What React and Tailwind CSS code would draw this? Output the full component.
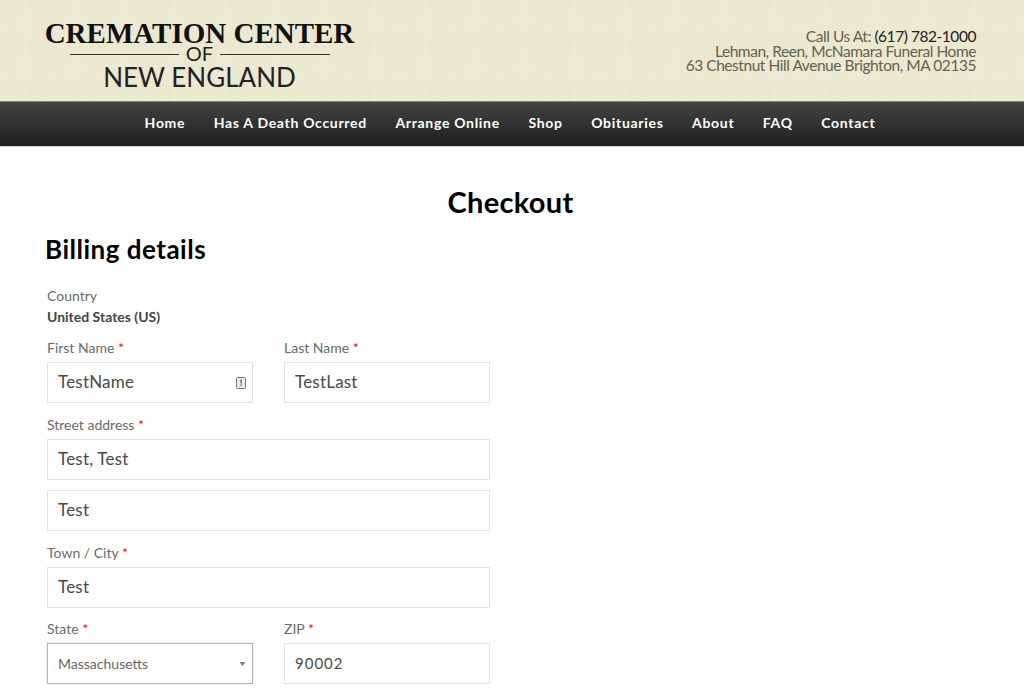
const Lbl = ({ children, req = true }) => (
  <div className="text-[14px] leading-[18px] text-[#6b6b6b] mb-[5px]">
    {children}
    {req && <span className="text-[#e01020]"> *</span>}
  </div>
);

const Inp = ({ value, children }) => (
  <div className="h-[41px] border border-[#e2e2e2] bg-white flex items-center justify-between px-[10px] pb-[2px] text-[17px] tracking-[0.2px] text-[#4a4a4a]">
    <span>{value}</span>
    {children}
  </div>
);

const nav = ["Home", "Has A Death Occurred", "Arrange Online", "Shop", "Obituaries", "About", "FAQ", "Contact"];

export default function App() {
  return (
    <div className="w-[1024px] h-[690px] overflow-hidden bg-white font-['Lato',sans-serif]">
      <header className="relative h-[102px] bg-[#eae8ce] border-b border-[#85836f] flex justify-between overflow-hidden">
        <svg className="absolute inset-0 w-full h-full" aria-hidden="true">
          <defs>
            <pattern id="p" width="50" height="46" patternUnits="userSpaceOnUse">
              <g stroke="#edebd6" strokeWidth="1.5" fill="none">
                <path d="M25 0C22 14 14 24 0 32M25 0C28 14 36 24 50 32" />
                <path d="M25 8C22 20 14 30 0 40M25 8C28 20 36 30 50 40" />
                <path d="M25 16C22 28 14 36 2 46M25 16C28 28 36 36 48 46" />
                <path d="M25 24C23 32 18 40 12 46M25 24C27 32 32 40 38 46" />
                <path d="M25 0V46" />
                <path d="M0 32C-3 38 -6 42 -8 46M50 32C47 24 42 14 38 0M0 32C3 24 8 14 12 0" />
              </g>
            </pattern>
          </defs>
          <rect width="100%" height="100%" fill="url(#p)" />
        </svg>
        <div className="relative ml-[44px] mt-[20px] w-[311px] flex flex-col items-center text-[#111]">
          <div className="font-['Liberation_Serif',serif] font-bold text-[29px] leading-[27px] whitespace-nowrap">CREMATION CENTER</div>
          <div className="flex items-center justify-center w-[260px] h-[15px] text-[20px] leading-[15px] text-[#222]">
            <div className="flex-1 h-px bg-[#333]" />
            <span className="mx-[7px] -translate-y-px">OF</span>
            <div className="flex-1 h-px bg-[#333]" />
          </div>
          <div className="text-[26px] leading-[30px] text-[#222] whitespace-nowrap">NEW ENGLAND</div>
        </div>
        <div className="relative mr-[48px] mt-[29px] text-right text-[15.5px] leading-[14.7px] tracking-[-0.45px] text-[#66604f]">
          <div>Call Us At: <span className="text-[#222]">(617) 782-1000</span></div>
          <div>Lehman, Reen, McNamara Funeral Home</div>
          <div>63 Chestnut Hill Avenue Brighton, MA 02135</div>
        </div>
      </header>
      <nav className="h-[45px] bg-gradient-to-b from-[#434343] to-[#202020] border-b border-[#d0d0d0] flex items-center justify-center gap-[28.5px] text-white font-bold text-[14px] tracking-[0.7px] pr-[4px] pb-[3px]">
        {nav.map((n) => (
          <span key={n}>{n}</span>
        ))}
      </nav>
      <main className="px-[47px]">
        <h1 className="text-center text-[29px] leading-[34px] tracking-[0.3px] font-bold text-black mt-[38px] mr-[3px]">Checkout</h1>
        <h2 className="-ml-[2px] text-[26px] leading-[30px] tracking-[0.5px] font-bold text-black mt-[15px]">Billing details</h2>
        <div className="w-[443px] mt-[23px]">
          <div className="text-[14px] leading-[18px] text-[#6b6b6b]">Country</div>
          <div className="text-[14px] leading-[18px] font-bold text-[#444] mt-[3px]">United States (US)</div>
          <div className="grid grid-cols-[206px_206px] gap-x-[31px] mt-[13px]">
            <div>
              <Lbl>First Name</Lbl>
              <Inp value="TestName">
                <svg width="12" height="14" viewBox="0 0 12 14" className="mr-[-5px] mt-[2px]">
                  <rect x="1.5" y="1.5" width="9" height="11" rx="1" fill="#e8e8e8" stroke="#777" />
                  <rect x="5.5" y="3.5" width="1.2" height="4" fill="#555" />
                  <rect x="5.5" y="8.5" width="1.2" height="1.4" fill="#555" />
                </svg>
              </Inp>
            </div>
            <div>
              <Lbl>Last Name</Lbl>
              <Inp value="TestLast" />
            </div>
          </div>
          <div className="mt-[13px]">
            <Lbl>Street address</Lbl>
            <Inp value="Test, Test" />
          </div>
          <div className="mt-[10px]">
            <Inp value="Test" />
          </div>
          <div className="mt-[13px]">
            <Lbl>Town / City</Lbl>
            <Inp value="Test" />
          </div>
          <div className="grid grid-cols-[206px_206px] gap-x-[31px] mt-[12px]">
            <div>
              <Lbl>State</Lbl>
              <div className="h-[41px] border border-[#b5b5b5] bg-white shadow-[0_0_2px_rgba(0,0,0,0.15)] flex items-center justify-between pl-[10px] pr-[6px] text-[14px] text-[#666]">
                <span>Massachusetts</span>
                <svg width="7" height="4" viewBox="0 0 8 5"><path d="M0 0h8L4 5z" fill="#888" /></svg>
              </div>
            </div>
            <div>
              <Lbl>ZIP</Lbl>
              <div className="h-[41px] border border-[#e2e2e2] bg-white flex items-center px-[10px] text-[15px] tracking-[1px] text-[#4a4a4a]">90002</div>
            </div>
          </div>
        </div>
      </main>
    </div>
  );
}
